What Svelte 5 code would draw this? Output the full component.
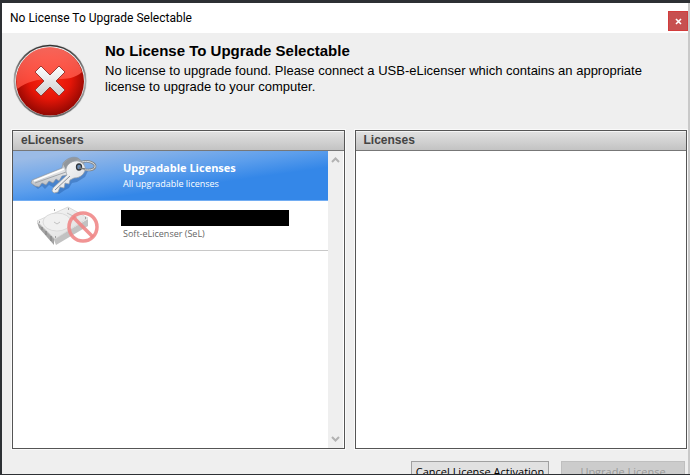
<script>
    const title = "No License To Upgrade Selectable"
    let selected = $state(0)
</script>

<main>
    <div class="dialog">
        <header>
            <span>{title}</span>
            <button class="close" aria-label="Close">
                <svg width="7" height="7" viewBox="0 0 7 7"><path d="M1 1L6 6M6 1L1 6" stroke="#fff" stroke-width="1.6" /></svg>
            </button>
        </header>

        <section class="message">
            <svg class="error" width="76" height="76" viewBox="0 0 76 76">
                <defs>
                    <linearGradient id="rim" x1="0" y1="0" x2="0" y2="1">
                        <stop offset="0" stop-color="#333" />
                        <stop offset=".5" stop-color="#aaa" />
                        <stop offset="1" stop-color="#666" />
                    </linearGradient>
                    <radialGradient id="red" cx=".5" cy=".45" r=".56">
                        <stop offset="0" stop-color="#fb2a14" />
                        <stop offset=".55" stop-color="#e51608" />
                        <stop offset="1" stop-color="#8e0702" />
                    </radialGradient>
                    <linearGradient id="shine" x1="0" y1="0" x2="0" y2="1">
                        <stop offset="0" stop-color="#ff7468" />
                        <stop offset="1" stop-color="#ff4a3a" />
                    </linearGradient>
                    <linearGradient id="cross" x1="0" y1="0" x2="0" y2="1">
                        <stop offset="0" stop-color="#fff" />
                        <stop offset="1" stop-color="#cfcfcf" />
                    </linearGradient>
                </defs>
                <circle cx="38" cy="38" r="37" fill="#ddd" />
                <circle cx="38" cy="38" r="35.5" fill="#eee" stroke="url(#rim)" stroke-width="1.6" />
                <circle cx="38" cy="38.5" r="34" fill="url(#red)" />
                <path d="M5.500 46A33 33 0 1 1 70 29C61 37 51 36 39 36C25 36 14 39 5.500 46Z" fill="url(#shine)" opacity=".85" />
                <path transform="translate(38 38)" d="M-9 -15L0 -6L9 -15L15 -9L6 0L15 9L9 15L0 6L-9 15L-15 9L-6 0L-15 -9Z" fill="url(#cross)" stroke="#9b3a35" stroke-width="1" />
            </svg>
            <div>
                <h1>{title}</h1>
                <p>No license to upgrade found. Please connect a USB-eLicenser which contains an appropriate license to upgrade to your computer.</p>
            </div>
        </section>

        <div class="panels">
            <section class="panel">
                <h2>eLicensers</h2>
                <div class="content">
                    <div class="list">
                        <button class="row" class:selected={selected == 0} onclick={() => selected = 0}>
                            <svg width="70" height="42" viewBox="0 0 70 42">
                                <defs>
                                    <linearGradient id="metal" x1="0" y1="0" x2="0" y2="1">
                                        <stop offset="0" stop-color="#8f9499" />
                                        <stop offset=".5" stop-color="#e4e5e7" />
                                        <stop offset="1" stop-color="#b9bdc2" />
                                    </linearGradient>
                                    <linearGradient id="bright" x1="0" y1="0" x2="1" y2="1">
                                        <stop offset="0" stop-color="#fff" />
                                        <stop offset="1" stop-color="#d8dadd" />
                                    </linearGradient>
                                </defs>
                                <path d="M4 30L9 34L13 31L16 34L20 30L24 32L26 38L30 39L36 35L40 33L43 28L48 27L56 22L60 14L52 19L44 16Z" fill="#164a91" opacity=".35" />
                                <path d="M34 8C38 3 44 1 49 3L55 8L50 20L38 20L33 21L30 26L27 24L24 28L20 26L17 30L13 28L10 32L6 31L2 28L3 25L33 13Z" fill="url(#metal)" stroke="#8a9199" stroke-width=".6" />
                                <path d="M34 9C38 4 44 2 49 4L42 8L37 15Z" fill="#92979c" />
                                <path d="M5 26L35 14" stroke="#fff" stroke-width="1.6" />
                                <path d="M6 28L37 17" stroke="#92979c" stroke-width=".8" />
                                <path d="M53 7C59 5 67 8 66 12C65 15 59 16 53 14" fill="none" stroke="#7f868d" stroke-width="2.6" />
                                <path d="M53 7C59 5 67 8 66 12C65 15 59 16 53 14" fill="none" stroke="#dadddf" stroke-width="1" />
                                <path d="M41 8C47 4 54 6 56 12C57 18 52 23 45 23L41 25L40 29L36 28L35 33L31 32L29 37L25 38L23 36L24 33L38 20C36 15 37 11 41 8Z" fill="url(#bright)" stroke="#9aa1a8" stroke-width=".7" />
                                <path d="M26 35L41 21" stroke="#8c9299" stroke-width="1" />
                                <ellipse cx="50" cy="12" rx="2.500" ry="3" fill="#6d8db5" stroke="#30363c" stroke-width="1.300" />
                                <path d="M50 13L56 14" stroke="#777" stroke-width="1.500" />
                            </svg>
                            <span class="text">
                                <b>Upgradable Licenses</b>
                                <small>All upgradable licenses</small>
                            </span>
                        </button>
                        <button class="row" class:selected={selected == 1} onclick={() => selected = 1}>
                            <svg width="70" height="42" viewBox="0 0 70 42">
                                <defs>
                                    <linearGradient id="disk" x1="0" y1="0" x2="1" y2="1">
                                        <stop offset="0" stop-color="#f8f8f8" />
                                        <stop offset="1" stop-color="#dcdcdc" />
                                    </linearGradient>
                                </defs>
                                <path d="M8 17L25 35L27 40L59 21V14L27 33Z" fill="#c2c2c2" />
                                <path d="M8 17L25 34V40L10 23Z" fill="#a2a2a2" />
                                <path d="M8 16L39 2L59 13L26 34Z" fill="url(#disk)" stroke="#d2d2d2" stroke-width=".8" />
                                <ellipse cx="28" cy="17" rx="14" ry="9" fill="#f0f0f0" stroke="#d4d4d4" stroke-width=".8" />
                                <path d="M25 17L28 19L31 17M38 8L48 13" fill="none" stroke="#c2c2c2" />
                                <path d="M10 17h1M39 4h1M25 5h1M56 13h1M26 32h1M13 22v3M17 26v4M22 31v5" stroke="#8c8c8c" stroke-width="1.500" />
                                <circle cx="54" cy="22" r="14" fill="none" stroke="#ef8585" stroke-width="3.500" opacity=".88" />
                                <path d="M44 12L64 32" stroke="#ef8585" stroke-width="3.500" opacity=".88" />
                            </svg>
                            <span class="text">
                                <span class="redacted"></span>
                                <small>Soft-eLicenser (SeL)</small>
                            </span>
                        </button>
                    </div>
                    <div class="scrollbar">
                        <svg width="9" height="6" viewBox="0 0 9 6"><path d="M1 5L4.500 1.500L8 5" /></svg>
                        <svg width="9" height="6" viewBox="0 0 9 6"><path d="M1 1L4.500 4.500L8 1" /></svg>
                    </div>
                </div>
            </section>
            <section class="panel">
                <h2>Licenses</h2>
            </section>
        </div>

        <footer>
            <button>Cancel License Activation</button>
            <button disabled>Upgrade License</button>
        </footer>
    </div>
</main>

<style>
    :global(body){
        background-color: #2d3034;
    }
    main{
        box-sizing: border-box;
        height: 100vh;
        padding: 3px 0 1px 2px;
        font-family: "Liberation Sans", Arial, sans-serif;
        overflow: hidden;
    }
    .dialog{
        box-sizing: border-box;
        height: 100%;
        display: flex;
        flex-direction: column;
        overflow: hidden;
        background-color: #efefef;
        border-right: 2px solid #c9c9c9;
    }
    header{
        flex: none;
        display: flex;
        justify-content: space-between;
        align-items: center;
        height: 30px;
        padding-left: 8px;
        background-color: white;
        font-family: Roboto, sans-serif;
        font-size: 12px;
        color: black;
    }
    .close{
        display: flex;
        align-items: center;
        justify-content: center;
        align-self: flex-end;
        width: 20px;
        height: 20px;
        margin-bottom: 2px;
        padding: 0;
        border: 1px solid #d23c3c;
        background-color: #c75050;
    }
    .message{
        flex: none;
        display: flex;
        gap: 17px;
        height: 87px;
        padding: 10px 16px 0 10px;
    }
    .error{
        flex: none;
    }
    h1{
        margin: 0;
        font-size: 15px;
        line-height: 16px;
    }
    p{
        margin: 4px 0 0;
        font-size: 13px;
        line-height: 16px;
    }
    .panels{
        flex: 1;
        min-height: 0;
        display: grid;
        grid-template-columns: 1fr 1fr;
        gap: 10px;
        padding-left: 10px;
        padding-right: 1px;
    }
    .panel{
        display: flex;
        flex-direction: column;
        min-width: 0;
        background-color: white;
        border: 1px solid #555;
        outline: 1px solid #fafafa;
    }
    h2{
        flex: none;
        margin: 0;
        padding-left: 8px;
        font-size: 12px;
        line-height: 19px;
        color: #444;
        background: linear-gradient(#e2e2e2, #c3c3c3);
        border-bottom: 1px solid #777;
        box-shadow: inset 0 1px #f5f5f5;
    }
    .content{
        flex: 1;
        display: flex;
    }
    .list{
        flex: 1;
    }
    .row{
        display: flex;
        align-items: center;
        gap: 22px;
        box-sizing: border-box;
        width: 100%;
        height: 50px;
        padding: 0 0 0 16px;
        text-align: left;
        color: #666;
        background-color: white;
        border: none;
        border-bottom: 1px solid #c8c8c8;
        font-family: "Open Sans", sans-serif;
    }
    .row.selected{
        color: white;
        background: linear-gradient(172deg, #9bbbe6 10%, #5c9eec 45%, #3487e8 65%);
        border-bottom-color: #72adf3;
    }
    .text{
        display: flex;
        flex-direction: column;
        align-items: flex-start;
    }
    b, small{
        padding-left: 2px;
    }
    b{
        font-size: 11px;
        line-height: 16px;
    }
    small{
        font-size: 9px;
        line-height: 15px;
    }
    .redacted{
        width: 168px;
        height: 16px;
        background-color: black;
    }
    .scrollbar{
        display: flex;
        flex-direction: column;
        justify-content: space-between;
        align-items: center;
        width: 15px;
        margin-right: 1px;
        padding: 6px 0;
        box-sizing: border-box;
        background-color: #efefef;
    }
    .scrollbar path{
        fill: none;
        stroke: #b2b2b2;
        stroke-width: 2;
    }
    footer{
        flex: none;
        display: flex;
        justify-content: flex-end;
        gap: 12px;
        height: 13px;
        padding: 12px 3px 0 0;
    }
    footer button{
        box-sizing: border-box;
        height: 21px;
        width: 138px;
        padding: 0;
        font-family: "Open Sans", sans-serif;
        font-size: 11px;
        color: black;
        background-color: #e1e1e1;
        border: 1px solid #a0a0a0;
        white-space: nowrap;
    }
    footer button:disabled{
        width: 124px;
        color: #9a9a9a;
        background-color: #ccc;
        border-color: #bfbfbf;
    }
</style>
